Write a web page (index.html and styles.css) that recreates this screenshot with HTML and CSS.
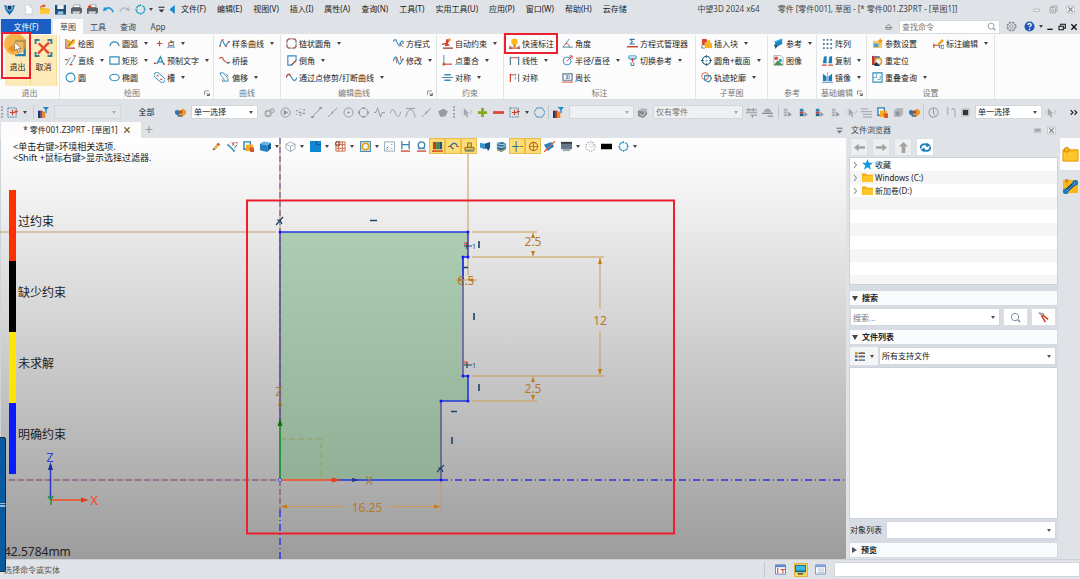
FILE: index.html
```html
<!DOCTYPE html>
<html lang="zh-CN">
<head>
    <meta charset="UTF-8">
    <meta name="viewport" content="width=device-width, initial-scale=1.0">
    <title>中望3D 2024 x64</title>
    <link rel="stylesheet" href="styles.css">
</head>
<body>
    <!-- icon sprite, every icon is on a 12 x 12 grid -->
    <svg class="sprite" aria-hidden="true">
        <symbol id="logo" viewBox="0 0 12 12"><path d="M0 1l3 1 1 4 2 2 2-2 1-4 3-1-2 6-4 5-4-5z" fill="#1268ae"/><path d="M4 2h4v3L6 7 4 5z" fill="#16324f"/><path d="M2 3l2 4M10 3L8 7" stroke="#6cc6f0"/></symbol>
        <symbol id="new" viewBox="0 0 12 12"><path d="M2.500 1h5l2.500 2.500V11H2.500z" fill="#fff" stroke="#c3c6cb" stroke-width=".8"/><path d="M7.500 1v2.500H10" fill="none" stroke="#c3c6cb" stroke-width=".8"/></symbol>
        <symbol id="open" viewBox="0 0 12 12"><path d="M1 4h4l1 1h5v6H2z" fill="#fdb515"/><path d="M2 6h10l-1.500 5H1z" fill="#ffc93a"/><path d="M1 5c0-3 2-4 4-4v-1l2.500 2L5 4V3C3 3 2 3.500 1 5z" fill="#e8501c"/></symbol>
        <symbol id="save" viewBox="0 0 12 12"><path d="M0 1h12v10.500H0z" fill="#1f4e79"/><path d="M2.500 1h7v4.500h-7z" fill="#e8f0f6"/><path d="M3 8h6v3.500H3z" fill="#8fc3e4"/></symbol>
        <symbol id="print" viewBox="0 0 12 12"><path d="M3 1h7l-1 3H2z" fill="#fff" stroke="#777" stroke-width=".6"/><path d="M0 5l2-1.500h8L12 5v4l-2 2H1L0 10z" fill="#5b6067"/><path d="M2 8h8l-1 3H1.500z" fill="#c9cdd2"/></symbol>
        <symbol id="plot" viewBox="0 0 12 12"><use href="#print"/><path d="M1 3h4M3 1v4" stroke="#e23b22" stroke-width="1.400"/></symbol>
        <symbol id="undo" viewBox="0 0 12 12"><path d="M11 9C10 4.500 6 3 2.500 5.500" fill="none" stroke="#2a95d5" stroke-width="1.800"/><path d="M0 8l1-5 4 3.500z" fill="#2a95d5"/></symbol>
        <symbol id="redo" viewBox="0 0 12 12"><path d="M1 9C2 4.500 6 3 9.500 5.500" fill="none" stroke="#b4bbc3" stroke-width="1.500"/><path d="M12 8l-1-5-4 3.500z" fill="#b4bbc3"/></symbol>
        <symbol id="orbit" viewBox="0 0 12 12"><circle cx="6" cy="6" r="4.600" fill="none" stroke="#3a9fc4" stroke-width="1.300" stroke-dasharray="5.200 2" stroke-dashoffset="-1"/><path d="M6 0v2.500M6 9.500V12M0 6h2.500M9.500 6H12" stroke="#3a9fc4"/></symbol>
        <symbol id="more" viewBox="0 0 12 12"><path d="M2 3h8" stroke="#333" stroke-width="1.500"/><path d="M2 6h8L6 10z" fill="#333"/></symbol>
        <symbol id="tri-left" viewBox="0 0 12 12"><path d="M9 0v12L2 6z" fill="#1585d0"/></symbol>
        <symbol id="min" viewBox="0 0 12 12"><rect x="2" y="5.500" width="8" height="3" rx="1" fill="#fff" stroke="#888" stroke-width=".8"/></symbol>
        <symbol id="restore" viewBox="0 0 12 12"><path d="M3.500 3.500v-2h7v7h-2" fill="#fff" stroke="#888"/><path d="M1.500 3.500h7v7h-7z" fill="#fff" stroke="#888"/><path d="M3.500 5.500h3v3h-3z" fill="none" stroke="#888"/></symbol>
        <symbol id="close" viewBox="0 0 12 12"><rect x=".5" y="1.500" width="11" height="9" rx="1" fill="#f7f8fa" stroke="#a3a8ae" stroke-width=".8"/><path d="M3 3l6 6M9 3L3 9" stroke="#888" stroke-width="1.600"/></symbol>
        <symbol id="cap" viewBox="0 0 12 12"><path d="M1.500 7.500L6 3l4.500 4.500z" fill="none" stroke="#666"/><path d="M2 9.500h8" stroke="#666"/></symbol>
        <symbol id="gear" viewBox="0 0 12 12"><circle cx="6" cy="6" r="4.800" fill="none" stroke="#8d9298" stroke-width="1.400" stroke-dasharray="2.600 1.200"/><circle cx="6" cy="6" r="4" fill="none" stroke="#8d9298" stroke-width=".7"/><circle cx="6" cy="6" r="1.800" fill="none" stroke="#8d9298"/></symbol>
        <symbol id="help" viewBox="0 0 12 12"><circle cx="6" cy="6" r="5.500" fill="#2456b8"/><path d="M4.200 4.500C4.400 2 8 2.300 7.800 4.400 7.600 5.600 6 5.700 6 7.200M6 8.500V10" fill="none" stroke="#fff" stroke-width="1.400"/></symbol>
        <symbol id="lens" viewBox="0 0 12 12"><circle cx="5.500" cy="5.500" r="4" fill="none" stroke="#73879a"/><path d="M8.500 8.500L11 11" stroke="#73879a" stroke-width="1.500"/></symbol>
        <symbol id="min-dark" viewBox="0 0 12 12"><path d="M2 9.500h8" stroke="#111" stroke-width="2"/></symbol>
        <symbol id="restore-dark" viewBox="0 0 12 12"><path d="M4 4V2h7v6H9" fill="none" stroke="#111" stroke-width="1.600"/><path d="M1.500 5h6.500v5H1.500z" fill="none" stroke="#111" stroke-width="1.600"/></symbol>
        <symbol id="close-dark" viewBox="0 0 12 12"><path d="M2 2l8 8M10 2l-8 8" stroke="#111" stroke-width="2"/></symbol>

        <symbol id="exit" viewBox="0 0 24 24"><path d="M9 3h12v18H9" fill="#f4f8fb" stroke="#1f7fb5" stroke-width="3"/><path d="M12 4v16" stroke="#8cc3df"/><path d="M0 13l7-6v3.500h6v5H7V19z" fill="#e8661f"/></symbol>
        <symbol id="cancel" viewBox="0 0 24 24"><path d="M2 7V2h5M17 2h5v5M22 17v5h-5M7 22H2v-5" fill="none" stroke="#3b7f9c" stroke-width="2.500"/><path d="M6 6l13 13M19 5L5 19" stroke="#e2492a" stroke-width="3"/></symbol>
        <symbol id="pointer" viewBox="0 0 12 16"><path d="M1 0v13l3-3 2.500 5 2-1L6.500 9.500H11z" fill="#fff" stroke="#555" stroke-width=".8"/></symbol>

        <symbol id="sketch" viewBox="0 0 12 12"><path d="M1 1v10h10" fill="none" stroke="#c53a2a" stroke-width="1.200"/><path d="M2 2h3l1 2 3-3 2 1v3L5 10H2z" fill="#f5b62e"/><path d="M3 9l6-7" stroke="#7b5410"/></symbol>
        <symbol id="line" viewBox="0 0 12 12"><path d="M1 11L6 2.500M6 10l5-8" stroke="#6b8798"/><path d="M0 5h3M9 1h3M5 10.500h3" stroke="#d0402e" stroke-width="1.400"/></symbol>
        <symbol id="circle" viewBox="0 0 12 12"><circle cx="6" cy="6" r="4.800" fill="none" stroke="#2d8ebc" stroke-width="1.200"/></symbol>
        <symbol id="arc" viewBox="0 0 12 12"><path d="M1 9C2 2.500 10 2.500 11 9" fill="none" stroke="#2d8ebc" stroke-width="1.300"/></symbol>
        <symbol id="rect" viewBox="0 0 12 12"><path d="M1 2h10v8H1z" fill="none" stroke="#2d8ebc" stroke-width="1.300"/></symbol>
        <symbol id="ellipse" viewBox="0 0 12 12"><ellipse cx="6" cy="6" rx="5.200" ry="3.600" fill="none" stroke="#2d8ebc" stroke-width="1.200"/></symbol>
        <symbol id="point" viewBox="0 0 12 12"><path d="M6 3v6M3 6h6" stroke="#cf4a38" stroke-width="1.300"/></symbol>
        <symbol id="text" viewBox="0 0 12 12"><path d="M3 10L7 2l3.500 8M5 7.500h4.500" fill="none" stroke="#2d8ebc" stroke-width="1.500"/><path d="M0 9h2M10 10h2" stroke="#d0402e" stroke-width="1.500"/></symbol>
        <symbol id="slot" viewBox="0 0 12 12"><rect x="-1" y="3" width="14" height="6" rx="3" fill="none" stroke="#2d8ebc" transform="rotate(40 6 6)"/><path d="M3 4h2M7 8h2" stroke="#d0402e" stroke-width="1.400"/></symbol>
        <symbol id="spline" viewBox="0 0 12 12"><path d="M1 9C2 4 3 1 4.500 4S7 10 8 8s1-3 3-4" fill="none" stroke="#3d8fb3" stroke-width="1.200"/><path d="M0 9h2M3 2h2M7 9h2M10 4h2" stroke="#d0402e" stroke-width="1.300"/></symbol>
        <symbol id="bridge" viewBox="0 0 12 12"><path d="M0 4C4 1 4 4 5.500 6S9 9 12 8" fill="none" stroke="#d0402e" stroke-width="1.200"/><path d="M9 9l3-1" stroke="#2d8ebc" stroke-width="1.500"/></symbol>
        <symbol id="offset" viewBox="0 0 12 12"><path d="M1 1h4c2 4 5 4 5 9H6C6 6 2 6 1 1z" fill="none" stroke="#2d8ebc"/><path d="M3 8l2 3M8 2l2 3" stroke="#567"/></symbol>
        <symbol id="fillet" viewBox="0 0 12 12"><rect x="1" y="1" width="10" height="10" rx="3" fill="none" stroke="#8da0ac" stroke-width="1.300"/><path d="M1 4c0-2 1-3 3-3M8 1c2 0 3 1 3 3M11 8c0 2-1 3-3 3M4 11c-2 0-3-1-3-3" fill="none" stroke="#cc5b48" stroke-width="1.300"/></symbol>
        <symbol id="chamfer" viewBox="0 0 12 12"><path d="M11 1H2v10h4l5-5z" fill="none" stroke="#2d8ebc" stroke-width="1.200"/><path d="M6 11l5-5" stroke="#d0402e" stroke-width="1.200"/></symbol>
        <symbol id="trim" viewBox="0 0 12 12"><path d="M0 6c2-5 4-4 6 0s4 5 6 0" fill="none" stroke="#2d8ebc" stroke-width="1.200"/><path d="M0 6c2-5 4-4 5-2" fill="none" stroke="#d0402e" stroke-width="1.200"/></symbol>
        <symbol id="equation" viewBox="0 0 12 12"><path d="M0 4c2-3 3-3 4 0s3 6 4 2 3-3 4 0" fill="none" stroke="#2d8ebc" stroke-width="1.200"/><path d="M7 5l4 5M11 5l-4 5" stroke="#667" stroke-width=".8"/></symbol>
        <symbol id="modify" viewBox="0 0 12 12"><path d="M0 7c2-6 4-6 5-2s2 7 4 3 1-4 3-3" fill="none" stroke="#2d8ebc" stroke-width="1.200"/><path d="M3 2l1 7M8 1l1 6" stroke="#b35c4b"/></symbol>
        <symbol id="auto" viewBox="0 0 12 12"><path d="M5 1l4 1-3 4 3 2-6 1z" fill="#d93622"/><path d="M0 7l4-1M1 11h11" stroke="#8e3426" stroke-width="1.200"/><circle cx="8" cy="2" r="1.500" fill="#ee8c2a"/></symbol>
        <symbol id="coincide" viewBox="0 0 12 12"><path d="M2 0v10" stroke="#2d8ebc"/><path d="M2 10h9" stroke="#d0402e" stroke-width="1.200"/><path d="M0 10h4M2 8v4" stroke="#d0402e"/></symbol>
        <symbol id="symmetric" viewBox="0 0 12 12"><path d="M2.500 3h7M2.500 9h7" stroke="#2d8ebc" stroke-width="1.600"/><path d="M0 6h12" stroke="#4a6f82"/></symbol>
        <symbol id="quick" viewBox="0 0 12 12"><path d="M0 11h12" stroke="#c53a2a" stroke-width="1.200"/><path d="M1 8v4M11 8v4M3 9.500L1 11l2 1M9 9.500L11 11 9 12" stroke="#c53a2a" fill="none" stroke-width=".8"/><circle cx="6" cy="4" r="3.500" fill="#fbb81c"/><path d="M4.500 7h3v3h-3z" fill="#d99a17"/></symbol>
        <symbol id="linear" viewBox="0 0 12 12"><path d="M1 3h10" stroke="#d0402e"/><path d="M1.500 2v9M10.500 2v9" stroke="#507c93" stroke-width="1.300"/></symbol>
        <symbol id="sym-dim" viewBox="0 0 12 12"><path d="M1.500 2v9" stroke="#d0402e" stroke-width="1.300"/><path d="M1 3h5" stroke="#d0402e"/><path d="M10.500 2v9M7 2v2M7 6v2" stroke="#6e7f8b" stroke-width="1.200"/></symbol>
        <symbol id="angle" viewBox="0 0 12 12"><path d="M8 1L1 10h11" fill="none" stroke="#3b88aa"/><path d="M4 6c3 0 4 2 4 4" fill="none" stroke="#d0402e"/></symbol>
        <symbol id="radius" viewBox="0 0 12 12"><circle cx="5.500" cy="6.500" r="4.300" fill="none" stroke="#2d8ebc"/><path d="M5 7l6-6M8 1h3v3" fill="none" stroke="#d0402e"/></symbol>
        <symbol id="perimeter" viewBox="0 0 12 12"><path d="M1 2h10v7H1z" fill="none" stroke="#607c90" stroke-width="1.300"/><path d="M4 4h3L5 5.500 7 7H4M8 4v3" fill="none" stroke="#2d6ebc" stroke-width=".8"/><path d="M0 11h12" stroke="#d0402e"/></symbol>
        <symbol id="eq-manage" viewBox="0 0 12 12"><path d="M8.500 1.500h-5L6 4 3.500 6.500h5" fill="none" stroke="#2d78a6" stroke-width="1.100"/><path d="M0 9.500h12" stroke="#d0402e" stroke-width="1.600"/></symbol>
        <symbol id="switch" viewBox="0 0 12 12"><path d="M2 1h8v3H2z" fill="none" stroke="#2d8ebc"/><path d="M2 3h8L8 6H4z" fill="#64a8c8"/><path d="M4.500 8v3.500h3V8" fill="none" stroke="#2d6f93"/><path d="M6 4v4" stroke="#d0402e"/></symbol>
        <symbol id="block" viewBox="0 0 12 12"><path d="M1 8V1h5l1 2-3 5z" fill="#d8472f"/><path d="M4 5h3V3c0-1 3-1 3 0v2l2 1v5H4z" fill="#f8b324"/><path d="M1 8v3h3" fill="none" stroke="#2d8ebc"/></symbol>
        <symbol id="round-sec" viewBox="0 0 12 12"><circle cx="6" cy="6" r="4.500" fill="none" stroke="#236f98" stroke-width="1.400"/><path d="M6 0v3M6 9v3M0 6h3M9 6h3" stroke="#555"/><circle cx="6" cy="6" r="1.200" fill="#6fb2d2"/></symbol>
        <symbol id="track" viewBox="0 0 12 12"><circle cx="4.500" cy="4.500" r="3.800" fill="none" stroke="#d25947"/><path d="M4 4h6l1.500 3-3 4L4 9z" fill="none" stroke="#3a86aa" stroke-width="1.200"/></symbol>
        <symbol id="ref" viewBox="0 0 12 12"><path d="M2 4l8-2.500v5L3 10z" fill="#1a83c4"/><path d="M2 3.500l8-3v2l-8 3z" fill="#3aa1dc"/><path d="M1 7l2 5 2-4z" fill="#1e4f77"/></symbol>
        <symbol id="image" viewBox="0 0 12 12"><path d="M1 .5h7.500L11 3v8.500H1z" fill="#f5f7f8" stroke="#8a98a3" stroke-width=".7"/><circle cx="3.500" cy="3.500" r="2" fill="#e04835"/><circle cx="8" cy="6" r="1.800" fill="#3a9ac9"/><path d="M1 11l4-5 3 2.500L11 11z" fill="#49904b"/></symbol>
        <symbol id="array" viewBox="0 0 12 12"><path d="M2 0v12M6 0v12M10 0v12" stroke="#547fa0" stroke-width="2" stroke-dasharray="2 2.500" stroke-dashoffset="-1"/></symbol>
        <symbol id="copy" viewBox="0 0 12 12"><path d="M1 9l1-7 3-1v8zM7 9l1-7 3-1v8z" fill="#1a7fb8"/><path d="M0 11h5M7 11h5" stroke="#d0402e" stroke-width="1.200"/></symbol>
        <symbol id="mirror" viewBox="0 0 12 12"><path d="M1 10V2l4 3v5zM11 10V2L7 5v5z" fill="#1a7fb8"/><path d="M6 0v12" stroke="#999" stroke-width=".8"/><path d="M0 11.500h12" stroke="#62a3c5"/></symbol>
        <symbol id="params" viewBox="0 0 12 12"><path d="M1 3h4l1 1h5v7H1z" fill="#f7c869"/><path d="M2 6h5v4H2z" fill="#4a9fd0"/><path d="M9 0l1 2 2 .5-1.500 1.500L11 6 9 5 7 6l.5-2L6 2.500 8 2z" fill="#ee9a24"/></symbol>
        <symbol id="relocate" viewBox="0 0 12 12"><path d="M0 1h3v10H0z" fill="#c73524"/><path d="M3 1h5l2 3v4H3z" fill="#4f86aa"/><circle cx="7" cy="7" r="3.500" fill="#f4f4f4" stroke="#e5a125" stroke-width="1.600"/><path d="M2 10l3-2 4 4H3z" fill="#173a5a"/></symbol>
        <symbol id="overlap" viewBox="0 0 12 12"><path d="M1 1h10v10H1z" fill="none" stroke="#2d8ebc" stroke-width="1.200"/><path d="M5 1v5H1M6 8h3V4" fill="none" stroke="#6aa1bb"/></symbol>
        <symbol id="dim-edit" viewBox="0 0 12 12"><path d="M0 8h8M1 6v5M7 6v5" stroke="#d0402e" stroke-width="1.100"/><path d="M5 6l5-5 2 2-5 5z" fill="#f2a427"/><path d="M9 8v4h3V8z" fill="none" stroke="#2d8ebc"/></symbol>
        <symbol id="launch" viewBox="0 0 12 12"><path d="M1 10V2h9" fill="none" stroke="#777" stroke-width="1.500"/><path d="M5 6l5 5M10.500 6v5h-5" fill="none" stroke="#333" stroke-width="1.500"/></symbol>

        <symbol id="pick" viewBox="0 0 12 12"><rect x="1" y="1" width="9" height="10" fill="none" stroke="#3b7f9c" stroke-dasharray="2 1"/><path d="M3 6h6M6 3v6" stroke="#d0402e" stroke-width="1.300"/><path d="M8 5h4M10 3v4" stroke="#d0402e"/></symbol>
        <symbol id="filter" viewBox="0 0 12 12"><path d="M0 4h3v8H0z" fill="#1e3766"/><path d="M3 4h2v8H3z" fill="#c33825"/><path d="M5 5h3v7H5z" fill="#e98b1f"/><path d="M5 0h7L9.500 3v4L8 6V3z" fill="#1d87c7"/></symbol>
        <symbol id="blocks" viewBox="0 0 12 12"><path d="M0 4l3-1 2 2v4H2L0 7z" fill="#2c79b3"/><path d="M5 4l4-2 3 2v3l-3 3H6z" fill="#f19a23"/><path d="M4 4h4v3H4z" fill="#b14d27"/><path d="M3 9h5v1.500H3z" fill="#4a5560"/></symbol>
        <symbol id="g-gears" viewBox="0 0 12 12"><circle cx="4.500" cy="7" r="3" fill="none" stroke="#a6abb0" stroke-width="2"/><circle cx="9" cy="4" r="2" fill="none" stroke="#a6abb0" stroke-width="1.400"/></symbol>
        <symbol id="g-play" viewBox="0 0 12 12"><circle cx="6" cy="6" r="5" fill="none" stroke="#92979c"/><path d="M4 3l5 3-5 3z" fill="#92979c"/></symbol>
        <symbol id="g-dots" viewBox="0 0 12 12"><path d="M1 4h2M5 2h1M9 3h2M1 8h1M4 6h3M5 9h2M8 7h3" stroke="#92979c" stroke-width="1.500"/></symbol>
        <symbol id="g-seg" viewBox="0 0 12 12"><path d="M1 11L11 1" stroke="#92979c"/><path d="M0 10h3v2H0zM9 0h3v2H9z" fill="#92979c"/></symbol>
        <symbol id="g-mid" viewBox="0 0 12 12"><path d="M1 11L11 1" stroke="#92979c"/><path d="M5 5h2v2H5z" fill="#92979c"/></symbol>
        <symbol id="g-center" viewBox="0 0 12 12"><circle cx="6" cy="6" r="5" fill="none" stroke="#92979c"/><circle cx="6" cy="6" r="1" fill="#777"/></symbol>
        <symbol id="g-circle" viewBox="0 0 12 12"><circle cx="6" cy="6" r="4.800" fill="none" stroke="#92979c"/><path d="M5 0h2v2H5zM5 10h2v2H5zM0 5h2v2H0zM10 5h2v2h-2z" fill="#92979c"/></symbol>
        <symbol id="g-zig" viewBox="0 0 12 12"><path d="M0 6h2l2-5 3 10 2-5h3" fill="none" stroke="#92979c"/></symbol>
        <symbol id="g-wave" viewBox="0 0 12 12"><path d="M0 7c2-6 4-5 6 0s4 4 6-2" fill="none" stroke="#92979c"/></symbol>
        <symbol id="g-tan" viewBox="0 0 12 12"><path d="M1 1.500h10M1 11C3 0 9 0 11 11" fill="none" stroke="#92979c"/></symbol>
        <symbol id="g-face" viewBox="0 0 12 12"><path d="M1 5l6-3 5 3-3 5-5 1z" fill="#979ca1"/></symbol>
        <symbol id="g-arrow" viewBox="0 0 12 12"><path d="M3 1v9l2-2 1.500 3.500 1.500-1L6.500 7H9z" fill="#a3a8ad"/><path d="M0 3v6M10 8l2-5" stroke="#b4b9be"/></symbol>
        <symbol id="plus" viewBox="0 0 12 12"><path d="M4.500 1h3v3.500H11v3H7.500V11h-3V7.500H1v-3h3.500z" fill="#86a81d"/></symbol>
        <symbol id="minus" viewBox="0 0 12 12"><path d="M0 4.500h12v3H0z" fill="#dc4632"/></symbol>
        <symbol id="hex" viewBox="0 0 12 12"><path d="M3 1h6l3 5-3 5H3L0 6z" fill="none" stroke="#4a8fb5"/></symbol>
        <symbol id="g-cube" viewBox="0 0 12 12"><path d="M1 4l4-3 6 1-3 3z" fill="#b7bbc0"/><path d="M1 4l7 1 3-3v6l-4 4-6-2z" fill="#84898e"/><path d="M3 7l3 3 5-7" fill="none" stroke="#e3e5e8"/></symbol>
        <symbol id="g-rows" viewBox="0 0 12 12"><path d="M0 3h12M0 6h12M5 9h7" stroke="#a5aaaf" stroke-width="1.500"/><path d="M3 1v4M8 1v4M7 9v3" stroke="#898e93"/></symbol>
        <symbol id="g-hat" viewBox="0 0 12 12"><path d="M2 6c0-6 8-6 8 0z" fill="#a5aaaf"/><path d="M0 7h12M6 10h6" stroke="#898e93" stroke-width="1.500"/></symbol>
        <symbol id="g-layer" viewBox="0 0 12 12"><path d="M2 2h4v2H2zM2 5h4v2H2zM2 8h4v2H2z" fill="#a9aeb3"/><path d="M7 5v6l2-2h2z" fill="#888d92"/></symbol>
        <symbol id="layer" viewBox="0 0 12 12"><path d="M2 2h4v3H2z" fill="#2e86b6"/><path d="M2 5h4v2H2z" fill="#c34432"/><path d="M2 7h4v3H2z" fill="#235c88"/><path d="M7 5v6l2-2h2z" fill="#888d92"/></symbol>
        <symbol id="g-pages" viewBox="0 0 12 12"><path d="M0 2h8M0 5h12M2 8h10M2 11h10" stroke="#a9aeb3" stroke-width="1.300"/></symbol>
        <symbol id="folder-doc" viewBox="0 0 12 12"><path d="M1 1h7v8H1z" fill="#fff" stroke="#2583b7" stroke-width="1.500"/><path d="M3 4h8v7H3z" fill="#f6ab22"/><path d="M7 7h5v5H8z" fill="#d6562d"/></symbol>
        <symbol id="g-box" viewBox="0 0 12 12"><path d="M1 4l3-3h7v7l-3 3H1z" fill="#b3b7bb"/><path d="M3 5h4v4H3z" fill="#8e9397"/></symbol>
        <symbol id="g-clock" viewBox="0 0 12 12"><circle cx="6" cy="6" r="5" fill="none" stroke="#a0a5aa" stroke-width="1.200"/><path d="M6 2v5l2 2" fill="none" stroke="#888"/></symbol>
        <symbol id="g-hook" viewBox="0 0 12 12"><path d="M2 1h1v8M7 3c3-3 4 0 4 3v5" fill="none" stroke="#a9aeb3" stroke-width="1.300"/></symbol>
        <symbol id="stop" viewBox="0 0 12 12"><path d="M0 0h12v12H0z" fill="#c9ccd0"/><path d="M2.500 2.500h7v7h-7z" fill="#333"/></symbol>
        <symbol id="chevrons" viewBox="0 0 12 12"><path d="M1 3l3 3-3 3M6 3l3 3-3 3" fill="none" stroke="#222" stroke-width="1.500"/></symbol>

        <symbol id="pencil" viewBox="0 0 12 12"><path d="M1 11l1-3 5-6 3 2-5 6z" fill="#efb14a"/><path d="M6 3l2-2 3 2-2 2z" fill="#d25a3a"/><path d="M1 11l1-3 2 2z" fill="#444"/></symbol>
        <symbol id="v-spline" viewBox="0 0 12 12"><path d="M1 4l7 7" stroke="#2d8ebc" stroke-width="1.600"/><path d="M0 5l2-2M7 12l2-2M8 8l3-4" stroke="#2d6f93"/><path d="M5 1l3 4M8 1L6 5M9 2h3" stroke="#c6523e"/></symbol>
        <symbol id="v-box" viewBox="0 0 12 12"><path d="M0 3l4-2.500 8 1.500-4 3z" fill="#5fb5e6"/><path d="M0 3l8 2v7l-8-2z" fill="#1e7fc2"/><path d="M8 5l4-3v6l-4 4z" fill="#135c95"/></symbol>
        <symbol id="v-wire" viewBox="0 0 12 12"><path d="M1 3.500L6 1l5 2.500v5L6 11.500l-5-3zM1 3.500L6 6l5-2.500M6 6v5.500" fill="#fff" stroke="#8895a2" stroke-width=".8"/></symbol>
        <symbol id="v-plane" viewBox="0 0 12 12"><path d="M0 0h12v12H0z" fill="#0f86d4"/><path d="M7 0v4h5" fill="none" stroke="#0d4e86"/></symbol>
        <symbol id="v-grid" viewBox="0 0 12 12"><path d="M1 1h10v10H1zM1 4h10M1 8h10M4 1v10M8 1v10" fill="#fff" stroke="#c76140"/><circle cx="3" cy="3" r="2.500" fill="none" stroke="#333" stroke-width=".8"/></symbol>
        <symbol id="v-ring" viewBox="0 0 12 12"><path d="M.5.5h11v11H.5z" fill="#c7dce9" stroke="#3b7fa9"/><circle cx="6" cy="6" r="3.500" fill="#f3f6f8" stroke="#e0a01c" stroke-width="1.800"/></symbol>
        <symbol id="v-frame" viewBox="0 0 12 12"><path d="M.5 1h11v10H.5z" fill="#fbfcfd" stroke="#8aa4b6"/><path d="M3 8l2-2M8 4h1M3 9h1M8 8h1" stroke="#555"/></symbol>
        <symbol id="v-h" viewBox="0 0 12 12"><path d="M2 0v9M10 0v9M2 4h8" stroke="#3d83a7" stroke-width="1.400"/><path d="M1 11h10" stroke="#d0402e" stroke-width="1.400"/></symbol>
        <symbol id="v-o" viewBox="0 0 12 12"><circle cx="6" cy="4.500" r="3.500" fill="none" stroke="#3d83a7" stroke-width="1.500"/><path d="M2 8.500h3M7 8.500h3" stroke="#3d83a7"/><path d="M1 11h10" stroke="#d0402e" stroke-width="1.400"/></symbol>
        <symbol id="v-bars" viewBox="0 0 12 12"><path d="M1 1h3.500v8H1z" fill="#c93a25"/><path d="M4.500 1H8v8H4.500z" fill="#418b45"/><path d="M8 1h3v8H8z" fill="#264d9b"/><path d="M0 11h12" stroke="#c93a25" stroke-width="1.500"/></symbol>
        <symbol id="v-bend" viewBox="0 0 12 12"><path d="M2 6l3-3c2-1 4 0 5 2" fill="none" stroke="#31759b" stroke-width="1.500"/><path d="M3 6l3 3" stroke="#31759b" stroke-width="1.500"/><path d="M0 6h3M9 6h3" stroke="#c5462f" stroke-width="1.300"/></symbol>
        <symbol id="v-stamp" viewBox="0 0 12 12"><path d="M4 7V2h4v5M1 10V7h10v3z" fill="#e7c667" stroke="#8a6619"/><path d="M1 11h10" stroke="#31759b"/></symbol>
        <symbol id="v-part" viewBox="0 0 12 12"><path d="M0 2l5 1v6L0 7z" fill="#2f96d0"/><path d="M5 3l6-2v6l-2 4-2-3-2 1z" fill="#14588e"/></symbol>
        <symbol id="v-cube" viewBox="0 0 12 12"><path d="M1 2l6-1 4 2v6l-5 3-5-2z" fill="#2b6c97"/><path d="M1 3l6 1 4-1M1 6l6 1 4-2" fill="none" stroke="#9fd0e8" stroke-width="1.200"/><path d="M1 9l5 2 5-3" fill="none" stroke="#e6ad3a"/></symbol>
        <symbol id="v-cross" viewBox="0 0 12 12"><path d="M4.500 0v12M0 6h8" stroke="#31759b" stroke-width="1.100"/><path d="M9 6h3" stroke="#9a731f" stroke-width="1.100"/></symbol>
        <symbol id="v-target" viewBox="0 0 12 12"><circle cx="6" cy="6" r="4.500" fill="none" stroke="#b86b16" stroke-width="1.200"/><path d="M6 2v8M2 6h8" stroke="#b86b16"/></symbol>
        <symbol id="v-slash" viewBox="0 0 12 12"><path d="M0 4l8-3 3 5-7 5z" fill="#1b86c8"/><path d="M0 12L12 0" stroke="#e35b3e" stroke-width="1.400"/></symbol>
        <symbol id="v-shade" viewBox="0 0 12 12"><path d="M0 1h12v8H0z" fill="#66788e"/><path d="M0 1h12v2H0z" fill="#333b49"/><path d="M2 9h8v2H2z" fill="#9aa3ae"/></symbol>
        <symbol id="v-dotted" viewBox="0 0 12 12"><circle cx="6" cy="6" r="5" fill="none" stroke="#8398a7" stroke-width="1.300" stroke-dasharray="1.300 1.500"/><circle cx="7" cy="5" r="2" fill="none" stroke="#9aafbd" stroke-dasharray="1 1"/></symbol>
        <symbol id="v-black" viewBox="0 0 12 12"><path d="M0 3h12v6H0z" fill="#000"/></symbol>

        <symbol id="nav-left" viewBox="0 0 12 12"><path d="M0 6l5-4v2.700h7v2.600H5V10z" fill="#a3a3a3"/></symbol>
        <symbol id="nav-right" viewBox="0 0 12 12"><path d="M12 6L7 2v2.700H0v2.600h7V10z" fill="#a3a3a3"/></symbol>
        <symbol id="nav-up" viewBox="0 0 12 12"><path d="M6 0l5 5H8v7H4V5H1z" fill="#a3a3a3"/></symbol>
        <symbol id="refresh" viewBox="0 0 12 12"><path d="M1 7C0 3 4 1 8 3.500M11 5c1 4-3 6-7 3.500" fill="none" stroke="#1b80b5" stroke-width="2"/><path d="M7 .5l4.500 3L7 6zM5 6v5.500L.5 8.500z" fill="#1b80b5"/></symbol>
        <symbol id="star" viewBox="0 0 12 12"><path d="M6 0l1.600 4.200H12L8.500 7l1.300 4.600L6 9l-3.800 2.600L3.500 7 0 4.200h4.400z" fill="#159ae0"/></symbol>
        <symbol id="folder" viewBox="0 0 12 12"><path d="M0 1.500h4.500L5.500 3H12v8H0z" fill="#f2a916"/><path d="M1 4h11v7H0z" fill="#ffc726"/></symbol>
        <symbol id="folder-ring" viewBox="0 0 18 18"><path d="M1 4h16v12H1z" fill="#fdb813" stroke="#e79a0c"/><path d="M2 6h14v9H2z" fill="#ffc62c"/><circle cx="5" cy="4" r="2.500" fill="#fdb813" stroke="#c98212"/></symbol>
        <symbol id="folder-wrench" viewBox="0 0 18 18"><path d="M1 2h16v14H1z" fill="#fdb813"/><path d="M4 14L14 5" stroke="#174d7e" stroke-width="4"/><circle cx="4" cy="14" r="3" fill="#1f78b8"/><circle cx="14" cy="5" r="3" fill="#1f78b8"/><path d="M5 14l9-9" stroke="#58aee0"/><circle cx="5" cy="3" r="2" fill="#d98243"/></symbol>
        <symbol id="find-tool" viewBox="0 0 12 12"><path d="M1 1l4 4 1-3z" fill="#f4f4f4" stroke="#555" stroke-width=".8"/><path d="M4 4l4 7M5 3l6 5" stroke="#d23f2a" stroke-width="1.700"/></symbol>
        <symbol id="tree" viewBox="0 0 12 12"><path d="M1 1h3v3H1z" fill="#e59a25"/><path d="M1 5h3v2H1zM1 9h3v2H1z" fill="#4a6075"/><path d="M5 2.500h7M5 6h7M5 10h7" stroke="#3b5e7b" stroke-width="1.500"/><path d="M8 1h2v2H8zM7 5h2v2H7z" fill="#cf5c33"/></symbol>
        <symbol id="tiny-pin" viewBox="0 0 12 12"><path d="M1 3h10v6H1z" fill="#b9bfc6"/><path d="M3 5.500h6" stroke="#737a82"/></symbol>
        <symbol id="st-table" viewBox="0 0 12 12"><path d="M.5 1h11v10H.5z" fill="#fff" stroke="#5b7fb9"/><path d="M.5 1h11v2.500H.5z" fill="#5b8ad0"/><path d="M3 4v6M6 6h5M8.500 6v4" stroke="#c04b38" stroke-width="1.200"/></symbol>
        <symbol id="st-screen" viewBox="0 0 12 12"><path d="M0 1h12v8H0z" fill="#0e6f9e"/><path d="M1 2h10v5H1z" fill="#3fb7de"/><path d="M3 10h6v1.500H3z" fill="#3c4146"/></symbol>
        <symbol id="st-list" viewBox="0 0 12 12"><path d="M.5 1h11v10H.5z" fill="#fff" stroke="#6f8fc4"/><path d="M.5 1h11v2.500H.5z" fill="#7da2de"/><path d="M3 5.500h7M3 7.500h7M3 9.500h7" stroke="#98a9c6" stroke-width=".8"/></symbol>
    </svg>

    <div class="app">
        <header class="titlebar">
            <svg class="ico logo"><use href="#logo"/></svg>
            <div class="quick-access">
                <button aria-label="新建"><svg class="ico"><use href="#new"/></svg></button>
                <button aria-label="打开"><svg class="ico"><use href="#open"/></svg></button>
                <button aria-label="保存"><svg class="ico"><use href="#save"/></svg></button>
                <button aria-label="打印"><svg class="ico"><use href="#print"/></svg></button>
                <button aria-label="绘图输出"><svg class="ico"><use href="#plot"/></svg></button>
                <button aria-label="撤销"><svg class="ico"><use href="#undo"/></svg></button>
                <button aria-label="重做"><svg class="ico"><use href="#redo"/></svg></button>
                <button class="with-caret" aria-label="刷新"><svg class="ico"><use href="#orbit"/></svg><i class="caret"></i></button>
                <button class="narrow" aria-label="更多"><svg class="ico small"><use href="#more"/></svg></button>
                <button class="narrow" aria-label="收起"><svg class="ico small"><use href="#tri-left"/></svg></button>
            </div>
            <nav class="menu">
                <button>文件(F)</button>
                <button>编辑(E)</button>
                <button>视图(V)</button>
                <button>插入(I)</button>
                <button>属性(A)</button>
                <button>查询(N)</button>
                <button>工具(T)</button>
                <button>实用工具(U)</button>
                <button>应用(P)</button>
                <button>窗口(W)</button>
                <button>帮助(H)</button>
                <button>云存储</button>
            </nav>
            <div class="title"><span>中望3D 2024 x64</span><span>零件 [零件001], 草图 - [* 零件001.Z3PRT - [草图1]]</span></div>
            <div class="window-buttons">
                <button aria-label="最小化"><svg class="ico small"><use href="#min"/></svg></button>
                <button aria-label="还原"><svg class="ico small"><use href="#restore"/></svg></button>
                <button aria-label="关闭"><svg class="ico small"><use href="#close"/></svg></button>
            </div>
        </header>

        <div class="tabbar">
            <button class="file-tab">文件(F)</button>
            <button class="tab active">草图</button>
            <button class="tab">工具</button>
            <button class="tab">查询</button>
            <button class="tab">App</button>
            <div class="tabbar-right">
                <button aria-label="折叠功能区"><svg class="ico small"><use href="#cap"/></svg></button>
                <label class="command-search">
                    <input type="text" placeholder="查找命令" aria-label="查找命令">
                    <svg class="ico small"><use href="#lens"/></svg>
                </label>
                <button aria-label="设置"><svg class="ico"><use href="#gear"/></svg></button>
                <button class="with-caret" aria-label="帮助"><svg class="ico"><use href="#help"/></svg><i class="caret"></i></button>
                <button class="mdi" aria-label="最小化文档"><svg class="ico tiny"><use href="#min-dark"/></svg></button>
                <button class="mdi" aria-label="还原文档"><svg class="ico tiny"><use href="#restore-dark"/></svg></button>
                <button class="mdi" aria-label="关闭文档"><svg class="ico tiny"><use href="#close-dark"/></svg></button>
            </div>
        </div>

        <div class="ribbon">
            <section class="group g-exit">
                <div class="big-buttons">
                    <button class="big marked"><span class="click-spot"></span><svg class="big-ico"><use href="#exit"/></svg>退出<svg class="pointer"><use href="#pointer"/></svg></button>
                    <button class="big"><svg class="big-ico"><use href="#cancel"/></svg>取消</button>
                </div>
                <footer>退出</footer>
            </section>
            <section class="group g-draw">
                <div class="cmds">
                    <button><svg class="ico"><use href="#sketch"/></svg>绘图</button>
                    <button><svg class="ico"><use href="#line"/></svg>直线<i class="caret"></i></button>
                    <button><svg class="ico"><use href="#circle"/></svg>圆</button>
                    <button><svg class="ico"><use href="#arc"/></svg>圆弧<i class="caret"></i></button>
                    <button><svg class="ico"><use href="#rect"/></svg>矩形<i class="caret"></i></button>
                    <button><svg class="ico"><use href="#ellipse"/></svg>椭圆</button>
                    <button><svg class="ico"><use href="#point"/></svg>点<i class="caret"></i></button>
                    <button><svg class="ico"><use href="#text"/></svg>预制文字<i class="caret"></i></button>
                    <button><svg class="ico"><use href="#slot"/></svg>槽<i class="caret"></i></button>
                </div>
                <footer class="has-launch">绘图<svg class="launch"><use href="#launch"/></svg></footer>
            </section>
            <section class="group g-curve">
                <div class="cmds">
                    <button><svg class="ico"><use href="#spline"/></svg>样条曲线<i class="caret"></i></button>
                    <button><svg class="ico"><use href="#bridge"/></svg>桥接</button>
                    <button><svg class="ico"><use href="#offset"/></svg>偏移<i class="caret"></i></button>
                </div>
                <footer>曲线</footer>
            </section>
            <section class="group g-edit">
                <div class="cmds">
                    <button><svg class="ico"><use href="#fillet"/></svg>链状圆角<i class="caret"></i></button>
                    <button><svg class="ico"><use href="#chamfer"/></svg>倒角<i class="caret"></i></button>
                    <button><svg class="ico"><use href="#trim"/></svg>通过点修剪/打断曲线<i class="caret"></i></button>
                    <button><svg class="ico"><use href="#equation"/></svg>方程式</button>
                    <button><svg class="ico"><use href="#modify"/></svg>修改<i class="caret"></i></button>
                </div>
                <footer class="has-launch">编辑曲线<svg class="launch"><use href="#launch"/></svg></footer>
            </section>
            <section class="group g-constraint">
                <div class="cmds">
                    <button><svg class="ico"><use href="#auto"/></svg>自动约束<i class="caret"></i></button>
                    <button><svg class="ico"><use href="#coincide"/></svg>点重合<i class="caret"></i></button>
                    <button><svg class="ico"><use href="#symmetric"/></svg>对称<i class="caret"></i></button>
                </div>
                <footer>约束</footer>
            </section>
            <section class="group g-dim">
                <div class="cmds">
                    <button class="marked"><svg class="ico"><use href="#quick"/></svg>快速标注</button>
                    <button><svg class="ico"><use href="#linear"/></svg>线性<i class="caret"></i></button>
                    <button><svg class="ico"><use href="#sym-dim"/></svg>对称</button>
                    <button><svg class="ico"><use href="#angle"/></svg>角度</button>
                    <button><svg class="ico"><use href="#radius"/></svg>半径/直径<i class="caret"></i></button>
                    <button><svg class="ico"><use href="#perimeter"/></svg>周长</button>
                    <button><svg class="ico"><use href="#eq-manage"/></svg>方程式管理器</button>
                    <button><svg class="ico"><use href="#switch"/></svg>切换参考<i class="caret"></i></button>
                </div>
                <footer>标注</footer>
            </section>
            <section class="group g-sub">
                <div class="cmds">
                    <button><svg class="ico"><use href="#block"/></svg>插入块<i class="caret"></i></button>
                    <button><svg class="ico"><use href="#round-sec"/></svg>圆角+截面<i class="caret"></i></button>
                    <button><svg class="ico"><use href="#track"/></svg>轨迹轮廓<i class="caret"></i></button>
                </div>
                <footer>子草图</footer>
            </section>
            <section class="group g-ref">
                <div class="cmds">
                    <button><svg class="ico"><use href="#ref"/></svg>参考<i class="caret"></i></button>
                    <button><svg class="ico"><use href="#image"/></svg>图像</button>
                </div>
                <footer>参考</footer>
            </section>
            <section class="group g-base">
                <div class="cmds">
                    <button><svg class="ico"><use href="#array"/></svg>阵列</button>
                    <button><svg class="ico"><use href="#copy"/></svg>复制<i class="caret"></i></button>
                    <button><svg class="ico"><use href="#mirror"/></svg>镜像<i class="caret"></i></button>
                </div>
                <footer class="has-launch">基础编辑<svg class="launch"><use href="#launch"/></svg></footer>
            </section>
            <section class="group g-set">
                <div class="cmds">
                    <button><svg class="ico"><use href="#params"/></svg>参数设置</button>
                    <button><svg class="ico"><use href="#relocate"/></svg>重定位</button>
                    <button><svg class="ico"><use href="#overlap"/></svg>重叠查询<i class="caret"></i></button>
                    <button><svg class="ico"><use href="#dim-edit"/></svg>标注编辑<i class="caret"></i></button>
                </div>
                <footer>设置</footer>
            </section>
        </div>

        <div class="toolbar">
            <i class="grip"></i>
            <button class="with-caret" aria-label="选取"><svg class="ico"><use href="#pick"/></svg><i class="caret"></i></button>
            <i class="sep"></i>
            <button aria-label="过滤器"><svg class="ico"><use href="#filter"/></svg></button>
            <div class="combo disabled"><select aria-label="过滤列表" disabled><option></option></select></div>
            <button class="all">全部</button>
            <button aria-label="零件拾取"><svg class="ico"><use href="#blocks"/></svg></button>
            <div class="combo"><select aria-label="选择模式"><option>单一选择</option></select></div>
            <div class="strip strip-snap">
                <button aria-label="捕捉设置"><svg class="ico"><use href="#g-gears"/></svg></button>
                <button aria-label="播放"><svg class="ico"><use href="#g-play"/></svg></button>
                <button aria-label="点"><svg class="ico"><use href="#g-dots"/></svg></button>
                <button aria-label="端点"><svg class="ico"><use href="#g-seg"/></svg></button>
                <button aria-label="中点"><svg class="ico"><use href="#g-mid"/></svg></button>
                <button aria-label="圆心"><svg class="ico"><use href="#g-center"/></svg></button>
                <button aria-label="象限点"><svg class="ico"><use href="#g-circle"/></svg></button>
                <button aria-label="折线"><svg class="ico"><use href="#g-zig"/></svg></button>
                <button aria-label="曲线"><svg class="ico"><use href="#g-wave"/></svg></button>
                <button aria-label="相切"><svg class="ico"><use href="#g-tan"/></svg></button>
                <button aria-label="线上"><svg class="ico"><use href="#g-mid"/></svg></button>
                <button aria-label="面上"><svg class="ico"><use href="#g-face"/></svg></button>
            </div>
            <i class="grip"></i>
            <div class="strip strip-pick">
                <button aria-label="选择"><svg class="ico"><use href="#g-arrow"/></svg></button>
                <button aria-label="添加"><svg class="ico"><use href="#plus"/></svg></button>
                <button aria-label="移除"><svg class="ico"><use href="#minus"/></svg></button>
                <button class="with-caret" aria-label="框选"><svg class="ico"><use href="#pick"/></svg><i class="caret"></i></button>
                <button aria-label="多边形"><svg class="ico"><use href="#hex"/></svg></button>
            </div>
            <i class="sep"></i>
            <button aria-label="属性过滤"><svg class="ico"><use href="#filter"/></svg></button>
            <div class="combo disabled light"><select aria-label="属性列表" disabled><option></option></select></div>
            <button aria-label="零件"><svg class="ico"><use href="#g-cube"/></svg></button>
            <div class="combo disabled wide"><select aria-label="范围" disabled><option>仅有零件</option></select></div>
            <button aria-label="行"><svg class="ico"><use href="#g-rows"/></svg></button>
            <button aria-label="帽"><svg class="ico"><use href="#g-hat"/></svg></button>
            <i class="sep"></i>
            <div class="strip strip-layer">
                <button aria-label="图层"><svg class="ico"><use href="#g-layer"/></svg></button>
                <button aria-label="图层颜色"><svg class="ico"><use href="#layer"/></svg></button>
                <button aria-label="图层上移"><svg class="ico"><use href="#layer"/></svg></button>
                <button aria-label="图层下移"><svg class="ico"><use href="#g-layer"/></svg></button>
                <button aria-label="光标"><svg class="ico"><use href="#g-arrow"/></svg></button>
                <button aria-label="列表"><svg class="ico"><use href="#g-pages"/></svg></button>
                <button aria-label="文件夹"><svg class="ico"><use href="#folder-doc"/></svg></button>
                <button aria-label="盒子"><svg class="ico"><use href="#g-box"/></svg></button>
                <button aria-label="积木"><svg class="ico"><use href="#blocks"/></svg></button>
            </div>
            <i class="sep"></i>
            <div class="strip strip-end">
                <button aria-label="历史"><svg class="ico"><use href="#g-clock"/></svg></button>
                <button aria-label="挂钩"><svg class="ico"><use href="#g-hook"/></svg></button>
                <button aria-label="停止"><svg class="ico small"><use href="#stop"/></svg></button>
            </div>
            <div class="combo"><select aria-label="拾取模式"><option>单一选择</option></select></div>
            <button aria-label="取消选择"><svg class="ico"><use href="#g-arrow"/></svg></button>
            <button class="overflow" aria-label="更多工具"><svg class="ico small"><use href="#chevrons"/></svg></button>
        </div>

        <div class="workspace">
            <main class="document">
                <div class="doc-tabs">
                    <button class="doc-tab">* 零件001.Z3PRT - [草图1]<svg class="tab-close" viewBox="0 0 12 12"><path d="M2 2l8 8M10 2l-8 8" stroke="#86683a" stroke-width="2"/></svg></button>
                    <button class="doc-add" aria-label="新标签">+</button>
                    <button class="doc-more" aria-label="标签列表"><svg class="ico small"><use href="#more"/></svg></button>
                </div>
                <div class="viewport">
                    <svg class="drawing" viewBox="0 138 846 421" preserveAspectRatio="xMinYMin slice">
                        <defs>
                            <linearGradient id="fill" x1="0" y1="0" x2="0" y2="1"><stop offset="0" stop-color="#adcdb2"/><stop offset="1" stop-color="#91b095"/></linearGradient>
                        </defs>
                        <path d="M280 232H468V257H463V376H468V401H441V480H280z" fill="url(#fill)"/>
                        <!-- reference lines -->
                        <path d="M0 232H276M468 138V275" stroke="#c09b68"/>
                        <path d="M0 480H280M280 138V510" stroke="#b3936e"/>
                        <path d="M0 480H280M280 138V510" stroke="#6e4a9c" stroke-dasharray="6 3"/>
                        <path d="M441 480H1400M280 510V900" stroke="#2b35e6" stroke-width="1.500" stroke-dasharray="7 3 1 3"/>
                        <path d="M280 439H321V480" fill="none" stroke="#94a15c" stroke-dasharray="6 3"/>
                        <!-- profile -->
                        <path d="M280 232V480M463 257V376M441 401V480" stroke="#5c4a9a" stroke-width="1.400"/>
                        <path d="M280 232H468M463 257H468M463 376H468V401H441M463 257V285M330 480H441" fill="none" stroke="#2338dd" stroke-width="1.600"/>
                        <path d="M468 232V257" stroke="#4338b0" stroke-width="1.400"/>
                        <g fill="#1414ff">
                            <circle cx="280" cy="232" r="1.500"/><circle cx="468" cy="232" r="1.500"/><circle cx="468" cy="257" r="1.500"/><circle cx="463" cy="257" r="1.500"/>
                            <circle cx="463" cy="376" r="1.500"/><circle cx="468" cy="376" r="1.500"/><circle cx="468" cy="401" r="1.500"/><circle cx="441" cy="401" r="1.500"/><circle cx="441" cy="480" r="1.500"/>
                        </g>
                        <!-- constraint marks -->
                        <g stroke="#1d4468" stroke-width="1.600" fill="none">
                            <path d="M370 220.500h7M451 411.500h6M463 267.500h5M479 241v7M474 313v7M479 384v7M452 437v7"/>
                            <path d="M276 225l7-8M277 220h3l2 4M437 472l7-7M438 468h3l2 4" stroke-width="1.200"/>
                            <path d="M464 246h8M467 243v6M464 365h8M467 362v6" stroke-width="1.200"/>
                        </g>
                        <path d="M464 242l3 3M464 245l3-3M464 361l3 3M464 364l3-3" stroke="#c74b3a"/>
                        <g class="mark-text"><text x="474" y="249">1</text><text x="474" y="368">1</text></g>
                        <!-- dimensions -->
                        <path d="M472 232H537M472 257H604M472 376H604M472 401H537M600 258V309M600 331V375M281 506.500H345M388 506.500H440M441 482V510M533 233v5M533 251v5M533 377v5M533 395v5M455 280h22" stroke="#cd9a55"/>
                        <path d="M533 233l2 5h-4zM533 256l2-5h-4zM533 377l2 5h-4zM533 400l2-5h-4zM600 258l2 6h-4zM600 375l2-6h-4zM281 506.500l6-2v4zM440 506.500l-6-2v4zM463 280l-5-2v4zM468 280l5-2v4z" fill="#c67a10"/>
                        <g class="dim-text">
                            <text x="533" y="246">2.5</text><text x="600" y="325">12</text><text x="533" y="393">2.5</text><text x="466" y="285">6.5</text><text x="367" y="512">16.25</text>
                        </g>
                        <!-- sketch axes -->
                        <path d="M280 480V425" stroke="#19a51d" stroke-width="1.500"/><path d="M280 418l2.500 8h-5z" fill="#136f19"/>
                        <path d="M280 399l2 7h-4z" fill="#946a3c"/>
                        <path d="M280 480H334" stroke="#fb4a1c" stroke-width="1.600"/><path d="M341 480l-9-2.500v5z" fill="#e2431e"/>
                        <path d="M359 480l-7-2v4z" fill="#26348d"/>
                        <circle cx="280" cy="480" r="1.500" fill="#fff" stroke="#2338dd"/>
                        <g class="axis-text"><text x="279" y="396">Z</text><text x="369" y="485">X</text></g>
                        <!-- view triad -->
                        <path d="M50.500 500V465" stroke="#2a39c8" stroke-width="1.500"/><path d="M50.500 462l2.500 8h-5z" fill="#1e2ea0"/>
                        <path d="M51 500H84" stroke="#fb4a1c" stroke-width="1.500"/><path d="M89 500l-8-2.500v5z" fill="#d8401c"/>
                        <path d="M48 496l3 4 2-4M51 500v5" stroke="#249b2e" stroke-width="1.500" fill="none"/>
                        <g class="triad-text"><text x="50" y="462" fill="#2b3fe0">Z</text><text x="94" y="505" fill="#fb4222">X</text></g>
                        <rect x="247" y="200.500" width="427" height="333" fill="none" stroke="#ee1f2c" stroke-width="2"/>
                    </svg>

                    <p class="hint">&lt;单击右键&gt;环境相关选项.<br>&lt;Shift +鼠标右键&gt;显示选择过滤器.</p>
                    <ul class="legend">
                        <li class="over">过约束</li>
                        <li class="under">缺少约束</li>
                        <li class="unsolved">未求解</li>
                        <li class="defined">明确约束</li>
                    </ul>
                    <p class="scale">42.5784mm</p>

                    <div class="view-tools">
                        <button aria-label="编辑"><svg class="ico small"><use href="#pencil"/></svg></button>
                        <button aria-label="曲线"><svg class="ico"><use href="#v-spline"/></svg></button>
                        <button aria-label="文件"><svg class="ico"><use href="#folder-doc"/></svg></button>
                        <button class="with-caret" aria-label="显示"><svg class="ico"><use href="#v-box"/></svg><i class="caret"></i></button>
                        <button class="with-caret" aria-label="线框"><svg class="ico"><use href="#v-wire"/></svg><i class="caret"></i></button>
                        <button class="with-caret" aria-label="平面"><svg class="ico"><use href="#v-plane"/></svg><i class="caret"></i></button>
                        <button class="with-caret" aria-label="栅格"><svg class="ico"><use href="#v-grid"/></svg><i class="caret"></i></button>
                        <button class="with-caret" aria-label="缩放"><svg class="ico"><use href="#v-ring"/></svg><i class="caret"></i></button>
                        <button aria-label="框"><svg class="ico"><use href="#v-frame"/></svg></button>
                        <button aria-label="标注显示"><svg class="ico"><use href="#v-h"/></svg></button>
                        <button aria-label="约束显示"><svg class="ico"><use href="#v-o"/></svg></button>
                        <button class="on" aria-label="约束状态"><svg class="ico"><use href="#v-bars"/></svg></button>
                        <button class="on" aria-label="端点"><svg class="ico"><use href="#v-bend"/></svg></button>
                        <button class="on" aria-label="轮廓"><svg class="ico"><use href="#v-stamp"/></svg></button>
                        <button aria-label="零件"><svg class="ico"><use href="#v-part"/></svg></button>
                        <button aria-label="实体"><svg class="ico"><use href="#v-cube"/></svg></button>
                        <button class="on" aria-label="十字"><svg class="ico"><use href="#v-cross"/></svg></button>
                        <button class="on" aria-label="目标"><svg class="ico"><use href="#v-target"/></svg></button>
                        <button aria-label="剖切"><svg class="ico"><use href="#v-slash"/></svg></button>
                        <button class="with-caret" aria-label="着色"><svg class="ico"><use href="#v-shade"/></svg><i class="caret"></i></button>
                        <button aria-label="虚线"><svg class="ico"><use href="#v-dotted"/></svg></button>
                        <button aria-label="颜色"><svg class="ico"><use href="#v-black"/></svg></button>
                        <button class="with-caret" aria-label="旋转"><svg class="ico"><use href="#orbit"/></svg><i class="caret"></i></button>
                    </div>
                    <button class="side-handle" aria-label="展开侧栏">≡</button>
                </div>
            </main>

            <aside class="browser">
                <div class="panel-head"><span>文件浏览器</span>
                    <button aria-label="固定"><svg class="ico small"><use href="#tiny-pin"/></svg></button>
                    <button aria-label="关闭面板"><svg class="ico small"><use href="#close"/></svg></button>
                </div>
                <div class="panel-body">
                    <div class="nav-row">
                        <button aria-label="后退"><svg class="ico"><use href="#nav-left"/></svg></button>
                        <button aria-label="前进"><svg class="ico"><use href="#nav-right"/></svg></button>
                        <button aria-label="向上"><svg class="ico"><use href="#nav-up"/></svg></button>
                        <button class="lit" aria-label="刷新列表"><svg class="ico"><use href="#refresh"/></svg></button>
                    </div>
                    <ul class="tree">
                        <li><svg class="chev" viewBox="0 0 6 6"><path d="M2 0l2.500 3L2 6" fill="none" stroke="#555" stroke-width=".8"/></svg><svg class="ico"><use href="#star"/></svg>收藏</li>
                        <li><svg class="chev" viewBox="0 0 6 6"><path d="M2 0l2.500 3L2 6" fill="none" stroke="#555" stroke-width=".8"/></svg><svg class="ico"><use href="#folder"/></svg>Windows (C:)</li>
                        <li><svg class="chev" viewBox="0 0 6 6"><path d="M2 0l2.500 3L2 6" fill="none" stroke="#555" stroke-width=".8"/></svg><svg class="ico"><use href="#folder"/></svg>新加卷(D:)</li>
                    </ul>
                    <button class="section-head"><i class="tri"></i>搜索</button>
                    <div class="search-row">
                        <div class="combo search"><input type="text" placeholder="搜索..." aria-label="搜索"></div>
                        <button aria-label="查找"><svg class="ico"><use href="#lens"/></svg></button>
                        <button aria-label="清除"><svg class="ico"><use href="#find-tool"/></svg></button>
                    </div>
                    <button class="section-head"><i class="tri"></i>文件列表</button>
                    <div class="type-row">
                        <button class="with-caret" aria-label="列表样式"><svg class="ico"><use href="#tree"/></svg><i class="caret"></i></button>
                        <div class="combo"><select aria-label="文件类型"><option>所有支持文件</option></select></div>
                    </div>
                    <div class="file-list"></div>
                    <div class="object-row">
                        <label for="objects">对象列表</label>
                        <div class="combo"><select id="objects"><option></option></select></div>
                    </div>
                    <button class="section-head"><i class="tri closed"></i>预览</button>
                </div>
            </aside>
            <nav class="dock">
                <button class="active" aria-label="文件浏览器"><svg class="dock-ico"><use href="#folder-ring"/></svg></button>
                <button aria-label="工具库"><svg class="dock-ico"><use href="#folder-wrench"/></svg></button>
            </nav>
        </div>

        <footer class="statusbar">
            <span class="prompt">选择命令或实体</span>
            <i class="sep"></i>
            <button aria-label="表格"><svg class="ico"><use href="#st-table"/></svg></button>
            <button class="on" aria-label="屏幕"><svg class="ico"><use href="#st-screen"/></svg></button>
            <button aria-label="消息"><svg class="ico"><use href="#st-list"/></svg></button>
            <input type="text" aria-label="命令行">
        </footer>
    </div>
</body>
</html>
```

FILE: styles.css
```css
* {
    box-sizing: border-box;
}
body {
    margin: 0;
    font: 8px/12px "Noto Sans", "Noto Sans CJK SC", sans-serif;
    color: #222;
    background: #dfe3e8;
}
button, input, select {
    font: inherit;
    color: inherit;
    border: 0;
    padding: 0;
    margin: 0;
    background: none;
    border-radius: 0;
}
button {
    display: flex;
    align-items: center;
    justify-content: center;
    flex: none;
    white-space: nowrap;
}
ul, p {
    margin: 0;
    padding: 0;
    list-style: none;
}
.sprite {
    position: absolute;
    width: 0;
    height: 0;
}
.app {
    display: flex;
    flex-direction: column;
    height: 100vh;
    overflow: hidden;
}
.ico {
    width: 11px;
    height: 11px;
    flex: none;
}
.ico.small {
    width: 9px;
    height: 9px;
}
.ico.tiny {
    width: 8px;
    height: 8px;
}
.caret {
    flex: none;
    border: 2px solid transparent;
    border-top: 3px solid #444;
    border-bottom: 0;
}
.sep {
    width: 1px;
    height: 14px;
    background: #c4c9d0;
    flex: none;
}

/* title bar */
.titlebar {
    display: flex;
    align-items: center;
    height: 18px;
    padding-left: 4px;
    flex: none;
}
.logo {
    margin-right: 5px;
}
.quick-access {
    display: flex;
}
.quick-access button {
    width: 16px;
}
.quick-access .with-caret {
    width: 24px;
    gap: 3px;
}
.quick-access .narrow {
    width: 11px;
}
.menu {
    display: flex;
    gap: 11px;
    margin-left: 3px;
}
.title {
    display: flex;
    gap: 18px;
    margin: 0 auto;
    white-space: nowrap;
    color: #444;
}
.window-buttons {
    display: flex;
    padding-right: 1px;
}
.window-buttons button {
    width: 17px;
}

/* tab bar */
.tabbar {
    display: flex;
    height: 16px;
    padding: 1px 0 0 1px;
    flex: none;
}
.file-tab {
    width: 50px;
    margin-right: 2px;
    color: #fff;
    background: #1c5fc4;
}
.tab {
    width: 30px;
    color: #444;
}
.tab.active {
    background: #fcfcfd;
}
.tabbar-right {
    display: flex;
    align-items: center;
    margin-left: auto;
}
.tabbar-right button {
    width: 22px;
}
.tabbar-right .with-caret {
    gap: 4px;
}
.tabbar-right .mdi {
    width: 12px;
}
.command-search {
    display: flex;
    align-items: center;
    width: 101px;
    height: 14px;
    padding: 0 3px 0 2px;
    background: #fff;
    border: 1px solid #d5d9de;
}
.command-search input {
    flex: 1;
    min-width: 0;
}
input {
    outline: 0;
}
input::placeholder {
    color: #777;
}

/* ribbon */
.ribbon {
    display: flex;
    height: 66px;
    padding-top: 1px;
    background: #fcfcfd;
    border-bottom: 1px solid #d9dce1;
    flex: none;
}
.group {
    display: flex;
    flex-direction: column;
    border-right: 1px solid #e1e3e7;
    padding-left: 5px;
}
.group footer {
    display: flex;
    align-items: center;
    justify-content: center;
    position: relative;
    height: 13px;
    margin-left: -5px;
    color: #777;
}
.group .has-launch {
    padding-right: 9px;
}
.launch {
    position: absolute;
    right: 3px;
    width: 6px;
    height: 6px;
}
.cmds {
    display: grid;
    grid-template-rows: repeat(3, 17px);
    grid-auto-flow: column;
    justify-content: start;
    justify-items: start;
}
.cmds button {
    justify-content: flex-start;
    gap: 2px;
    position: relative;
}
.cmds .caret {
    margin-left: 4px;
}
.g-exit { width: 60px; }
.g-draw { width: 154px; }
.g-draw .cmds { grid-template-columns: 44px 45px 60px; }
.g-curve { width: 67px; }
.g-edit { width: 156px; }
.g-edit .cmds { grid-template-columns: 107px 44px; }
.g-constraint { width: 67px; }
.g-dim { width: 192px; }
.g-dim .cmds { grid-template-columns: 53px 65px 69px; }
.g-sub { width: 72px; }
.g-ref { width: 49px; }
.g-base { width: 50px; }
.g-set { width: 128px; }
.g-set .cmds { grid-template-columns: 61px 62px; }
.big-buttons {
    display: flex;
    height: 51px;
}
.big {
    flex-direction: column;
    justify-content: flex-start;
    gap: 3px;
    position: relative;
    width: 26px;
    padding-top: 3px;
    background: #fcebb9;
    border-right: 1px solid #f5dc94;
}
.big-ico {
    width: 19px;
    height: 20px;
}
.click-spot {
    position: absolute;
    top: -2px;
    left: -1px;
    width: 22px;
    height: 22px;
    border-radius: 50%;
    background: rgba(245, 160, 30, .7);
}
.pointer {
    position: absolute;
    top: 7px;
    left: 9px;
    width: 8px;
    height: 11px;
}
/* red frame around a command */
.marked::after {
    content: "";
    position: absolute;
    inset: -2px -4px -2px -5px;
    border: 2px solid #ee1f2c;
    z-index: 2;
}
.big.marked::after {
    inset: -3px -1px 7px -4px;
}

/* selection toolbar */
.toolbar {
    display: flex;
    align-items: center;
    height: 22px;
    padding: 2px 0 0 1px;
    flex: none;
}
.toolbar > button {
    width: 16px;
}
.toolbar > .with-caret {
    width: 27px;
}
.with-caret {
    gap: 5px;
}
.grip {
    width: 2px;
    height: 12px;
    border-left: 2px dotted #a4aab2;
    flex: none;
}
.combo {
    display: flex;
    align-items: center;
    position: relative;
    width: 67px;
    height: 14px;
    background: #fff;
    border: 1px solid #d3d7dc;
    flex: none;
}
.toolbar .combo {
    margin-left: 3px;
}
.combo::after {
    content: "";
    position: absolute;
    right: 4px;
    border: 2px solid transparent;
    border-top: 3px solid #555;
    border-bottom: 0;
    pointer-events: none;
}
.combo select, .combo input {
    appearance: none;
    width: 100%;
    height: 100%;
    padding: 0 2px;
    opacity: 1;
}
.combo.disabled {
    background: #e3e6e9;
    color: #777;
}
.combo.disabled::after {
    border-top-color: #aaa;
}
.combo.light, .combo.wide {
    background: #eef0f2;
}
.combo.light {
    width: 65px;
}
.combo.wide {
    width: 90px;
}
.toolbar .all {
    width: 51px;
}
.toolbar > .sep {
    margin: 0 1px 0 3px;
}
.strip {
    display: flex;
    justify-content: space-between;
    flex: none;
}
.strip-snap {
    width: 184px;
    margin: 0 5px 0 6px;
}
.strip-pick {
    width: 84px;
    margin-left: 6px;
}
.strip-layer {
    width: 138px;
    margin-left: 2px;
}
.strip-end {
    width: 42px;
    margin: 0 2px 0 3px;
}
.toolbar .overflow {
    margin-left: auto;
    width: 11px;
}

/* workspace */
.workspace {
    display: flex;
    flex: 1;
    min-height: 0;
}
.document {
    display: flex;
    flex-direction: column;
    flex: 1;
    min-width: 0;
}
.doc-tabs {
    display: flex;
    height: 16px;
    flex: none;
}
.doc-tab {
    gap: 5px;
    width: 140px;
    margin-left: 1px;
    padding-left: 12px;
    background: #fcfcfd;
}
.tab-close {
    width: 8px;
    height: 8px;
}
.doc-add {
    width: 16px;
    font-size: 14px;
    color: #999;
}
.doc-more {
    width: 14px;
    margin-left: auto;
    opacity: .6;
}
.viewport {
    position: relative;
    flex: 1;
    background: linear-gradient(#fff, #9c9c9c);
    border-left: 1px solid #cfd4da;
}
.drawing {
    position: absolute;
    left: -1px;
    top: 0;
    width: calc(100% + 1px);
    height: 100%;
}
.drawing text {
    font-family: "Noto Sans", "Open Sans", sans-serif;
    text-anchor: middle;
}
.dim-text {
    font-size: 12px;
    fill: #b8792a;
}
.axis-text {
    font-size: 12px;
    fill: #a17a35;
}
.triad-text {
    font-size: 13px;
}
.mark-text {
    font-size: 7px;
    fill: #1d4468;
}
.hint {
    position: absolute;
    left: 12px;
    top: 3px;
    font-size: 9px;
    line-height: 11px;
}
.legend {
    position: absolute;
    left: 8px;
    top: 52px;
    font-size: 12px;
}
.legend li {
    display: flex;
    align-items: center;
    height: 71px;
    padding: 0 0 7px 2px;
    border-left: 7px solid #ff2f00;
}
.legend .under {
    border-color: #000;
}
.legend .unsolved {
    border-color: #ffe600;
}
.legend .defined {
    border-color: #0a1cff;
}
.scale {
    position: absolute;
    left: 3px;
    bottom: 0;
    font: 12px/14px "Noto Sans", sans-serif;
}
.view-tools {
    position: absolute;
    left: 207px;
    top: 0;
    display: flex;
}
.view-tools button {
    width: 16px;
    height: 16px;
}
.view-tools .with-caret {
    width: 25px;
    gap: 4px;
    padding-left: 1px;
}
.view-tools .on {
    background: #ffdd75;
    border: 1px solid #e8bd4c;
}
.side-handle {
    position: absolute;
    left: -2px;
    bottom: -13px;
    width: 7px;
    height: 135px;
    color: #fff;
    background: #0a5aa0;
    border: 1px solid #1b2733;
    border-radius: 0 2px 2px 0;
    z-index: 3;
}

/* file browser */
.browser {
    display: flex;
    flex-direction: column;
    width: 212px;
    padding: 0 0 1px 3px;
    flex: none;
}
.panel-head {
    display: flex;
    align-items: center;
    height: 16px;
    padding-left: 2px;
    color: #444;
    flex: none;
}
.panel-head span {
    margin-right: auto;
}
.panel-head button {
    width: 14px;
}
.panel-body {
    display: flex;
    flex-direction: column;
    flex: 1;
    min-height: 0;
    background: #d7dce4;
}
.nav-row {
    display: flex;
    gap: 4px;
    height: 19px;
    padding: 0 0 1px 1px;
    background: #dfe3e8;
}
.nav-row button {
    width: 18px;
    background: #eceef0;
    border: 1px solid #dcdfe3;
}
.nav-row .lit {
    background: #fff;
}
.tree {
    height: 128px;
    margin-bottom: 5px;
    border: 1px solid #ccd2da;
    background: repeating-linear-gradient(#fff 0 13px, #f5f5f5 13px 26px);
    flex: none;
}
.tree li {
    display: flex;
    align-items: center;
    gap: 2px;
    height: 13px;
    padding-left: 2px;
}
.chev {
    width: 6px;
    height: 6px;
    margin-right: 2px;
}
.section-head {
    justify-content: flex-start;
    gap: 4px;
    height: 16px;
    padding-left: 2px;
    font-weight: bold;
    background: #fafbfc;
    border: 1px solid #d7dbe1;
}
.tri {
    border: 3px solid transparent;
    border-top: 5px solid #444;
    border-bottom: 0;
}
.tri.closed {
    border: 3px solid transparent;
    border-left: 5px solid #555;
    border-right: 0;
}
.search-row, .type-row, .object-row {
    display: flex;
    padding: 2px 2px 3px 1px;
    flex: none;
}
.search-row {
    gap: 3px;
}
.search-row button {
    width: 25px;
    background: #fff;
    border: 1px solid #dcdfe3;
}
.panel-body .combo {
    flex: 1;
    width: auto;
    height: 18px;
}
.type-row {
    padding-bottom: 2px;
}
.type-row button {
    width: 28px;
    background: #f3f5f7;
    margin-right: 1px;
}
.file-list {
    flex: 1;
    background: #fff;
    border: 1px solid #ccd2da;
}
.object-row label {
    width: 36px;
    line-height: 18px;
    white-space: nowrap;
}
.dock {
    width: 22px;
    padding: 16px 0 0 2px;
    flex: none;
}
.dock button {
    width: 100%;
    height: 32px;
}
.dock .active {
    background: #fcfcfd;
}
.dock-ico {
    width: 17px;
    height: 17px;
}

/* status bar */
.statusbar {
    display: flex;
    align-items: center;
    height: 20px;
    border-top: 1px solid #cdd2d8;
    flex: none;
}
.prompt {
    margin: 0 auto 0 4px;
    color: #555;
}
.statusbar .sep {
    margin-right: 6px;
    height: 16px;
}
.statusbar button {
    width: 14px;
    height: 14px;
    margin: 0 3px;
}
.statusbar .on {
    background: #ffd765;
    border: 1px solid #e0b040;
}
.statusbar input {
    width: calc(23% - 2px);
    height: 15px;
    margin-left: 3px;
    background: #fff;
    border: 1px solid #d3d7dc;
}
```
